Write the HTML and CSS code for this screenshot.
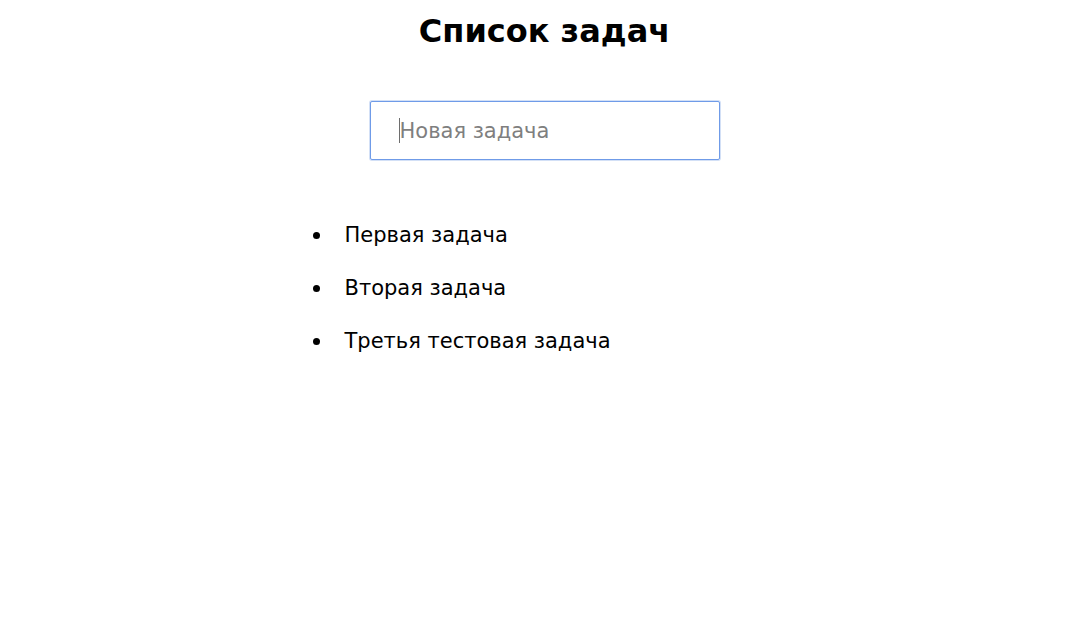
FILE: index.html
```html
<!DOCTYPE html>
<html lang="ru">
<head>
<meta charset="utf-8">
<title>Список задач</title>
<link rel="stylesheet" href="styles.css">
</head>
<body>
<main class="app">
  <h1 class="title">Список задач</h1>
  <div class="form">
    <div class="field">
      <input class="new-task" type="text" placeholder="Новая задача">
      <span class="caret"></span>
    </div>
  </div>
  <ul class="tasks">
    <li class="task">Первая задача</li>
    <li class="task">Вторая задача</li>
    <li class="task">Третья тестовая задача</li>
  </ul>
</main>
</body>
</html>
```

FILE: styles.css
```css
html, body {
  margin: 0;
  background: #ffffff;
}
body {
  padding-left: 9px;
  font-family: "DejaVu Sans", Verdana, sans-serif;
  color: #000;
}
.app {
  width: 478px;
  margin: 0 auto;
  display: flex;
  flex-direction: column;
}
.title {
  margin: 14px 0 0;
  font-size: 32px;
  font-weight: bold;
  text-align: center;
  line-height: 35px;
}
.form {
  display: flex;
  justify-content: center;
  margin-top: 52px;
}
.field {
  position: relative;
}
.new-task {
  display: block;
  box-sizing: border-box;
  width: 350px;
  height: 59px;
  padding: 0 0 0 29px;
  border: 1px solid #6f9be8;
  border-radius: 2px;
  outline: none;
  font-family: "DejaVu Sans", Verdana, sans-serif;
  font-size: 21px;
  color: #000;
  background: #fff;
  box-shadow: 0 0 0 1px #d3e0f6;
  caret-color: transparent;
}
.new-task::placeholder {
  color: #7f7f7f;
}
.caret {
  position: absolute;
  left: 29px;
  top: 17px;
  width: 1px;
  height: 25px;
  background: #6e6e6e;
}
.tasks {
  list-style: none;
  margin: 64px 0 0;
  padding-left: 39px;
}
.task {
  display: flex;
  align-items: center;
  font-size: 21px;
  line-height: 23px;
  margin-bottom: 30px;
}
.task::before {
  content: "";
  flex: none;
  width: 7px;
  height: 7px;
  border-radius: 50%;
  background: #000;
  margin-left: -32px;
  margin-right: 25px;
}
```
